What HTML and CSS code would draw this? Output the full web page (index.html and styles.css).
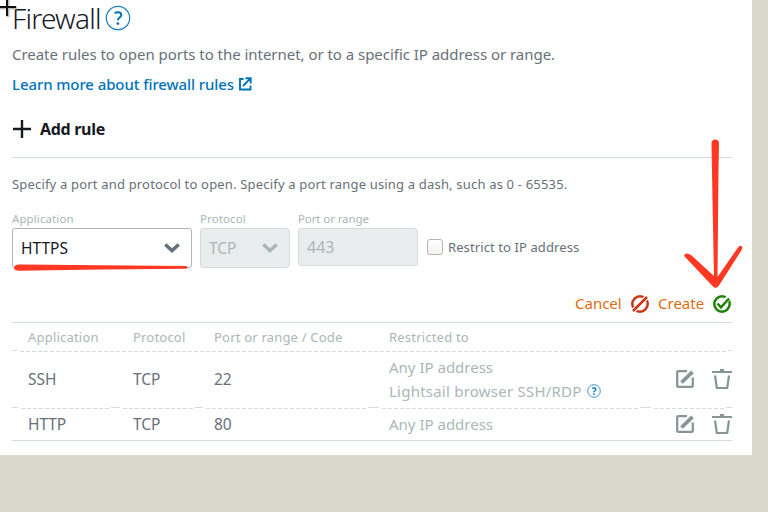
FILE: index.html
```html
<!DOCTYPE html>
<html lang="en">
<head>
<meta charset="utf-8">
<title>Firewall</title>
<link rel="stylesheet" href="styles.css">
</head>
<body>
<main class="panel">
  <header class="heading">
    <h1 class="title">Firewall</h1>
    <svg class="help" width="26" height="26" viewBox="0 0 26 26"><circle cx="13" cy="13" r="11.7" fill="none" stroke="#1a7fc1" stroke-width="1.2"/><path d="M9.6 8.2C12 6.8 16.3 6.7 16.3 9.9C16.3 12.6 12.7 12.5 12.9 15.4" fill="none" stroke="#0073bb" stroke-width="2"/><circle cx="12.9" cy="18.6" r="1.4" fill="#0073bb"/></svg>
  </header>
  <p class="intro">Create rules to open ports to the internet, or to a specific IP address or range.</p>
  <a class="learn"><span class="learn-text">Learn more about firewall rules</span>
    <svg width="14" height="14" viewBox="0 0 14 14" fill="none" stroke="#0073bb" stroke-width="1.9"><path d="M5.5 2H2v10.500h10.500V8.500M7.500 1.200h5.200v5.200M12.500 1.400L5 9"/></svg>
  </a>
  <div class="add">
    <svg width="20" height="20" viewBox="0 0 20 20"><path d="M10 1v18M1 10h18" stroke="#16191f" stroke-width="2.400"/></svg>
    <span class="add-text">Add rule</span>
  </div>
  <p class="hint"><span>Specify a port and protocol to open. Specify a port range using a dash, such as 0 - 65535.</span></p>
  <section class="form">
    <div class="field app"><label>Application</label>
      <div class="control"><span class="value">HTTPS</span><svg width="18" height="12" viewBox="0 0 18 12"><path d="M2.300 2.500L9 8.500l6.700-6" fill="none" stroke="#687078" stroke-width="3.600"/></svg></div>
    </div>
    <div class="field proto"><label>Protocol</label>
      <div class="control off"><span class="value">TCP</span><svg width="18" height="12" viewBox="0 0 18 12"><path d="M2.300 2.500L9 8.500l6.700-6" fill="none" stroke="#aab7b8" stroke-width="3.600"/></svg></div>
    </div>
    <div class="field port"><label>Port or range</label>
      <div class="control off short"><span>443</span></div>
    </div>
    <div class="restrict"><i class="box"></i><span class="restrict-text">Restrict to IP address</span></div>
  </section>
  <div class="actions">
    <span class="cancel">Cancel</span>
    <svg class="ban" width="18" height="18" viewBox="0 0 18 18"><circle cx="9" cy="9" r="7.700" fill="none" stroke="#d13212" stroke-width="2.500"/><path d="M1 17L17 1" stroke="#fff" stroke-width="5"/><path d="M2 16L16 2" stroke="#d13212" stroke-width="2.500"/></svg>
    <span class="create">Create</span>
    <svg class="ok" width="18" height="18" viewBox="0 0 18 18"><circle cx="9" cy="9" r="7.700" fill="none" stroke="#1d8102" stroke-width="2.500"/><path d="M9 10L17 1" stroke="#fff" stroke-width="5"/><path d="M4.500 8.500l3.500 3.800L16 3.500" fill="none" stroke="#1d8102" stroke-width="2.500"/></svg>
  </div>
  <section class="rules">
    <div class="row head"><span>Application</span><span>Protocol</span><span class="h-port">Port or range / Code</span><span>Restricted to</span></div>
    <svg class="rule" width="720" height="2" viewBox="0 0 720 2"><path d="M0 .5h5M716 .5h4" stroke="#d5dbdb"/><path d="M8 1.500h706" stroke="#d5dbdb" stroke-dasharray="4 2"/></svg>
    <div class="row ssh"><span>SSH</span><span>TCP</span><span>22</span>
      <div class="who"><span class="any">Any IP address</span><div class="browser"><span class="rdp">Lightsail browser SSH/RDP</span><svg width="14" height="14" viewBox="0 0 26 26"><circle cx="13" cy="13" r="11.700" fill="none" stroke="#3c92ca" stroke-width="1.800"/><path d="M9.600 8.200C12 6.800 16.300 6.700 16.300 9.900C16.300 12.600 12.700 12.500 12.900 15.400" fill="none" stroke="#0073bb" stroke-width="2.600"/><circle cx="12.900" cy="18.800" r="1.700" fill="#0073bb"/></svg></div></div>
      <svg class="edit" width="19" height="18" viewBox="0 0 19 18"><path d="M12 1.200H3.300Q2.200 1.200 2.200 2.300v13.400q0 1.100 1.100 1.100h13.400q1.100 0 1.100-1.100V7.500" fill="none" stroke="#879596" stroke-width="2.300"/><path d="M6.500 12.500L17.500 1.800" stroke="#879596" stroke-width="3.800"/></svg>
      <svg class="trash" width="20" height="20" viewBox="0 0 20 20"><path d="M0 3h20M8 1h4M3 6.500l1.800 12.500h10.400l1.800-12.500" fill="none" stroke="#879596" stroke-width="2.200"/></svg>
    </div>
    <svg class="rule" width="720" height="2" viewBox="0 0 720 2"><path d="M0 .5h6M99 .5h9M183 .5h8M356 .5h11M628 .5h11M714 .5h6" stroke="#d5dbdb"/><path d="M9 1.500h88M111 1.500h70M194 1.500h160M370 1.500h256M642 1.500h70" stroke="#d5dbdb" stroke-dasharray="4 2"/></svg>
    <div class="row http"><span class="c-http">HTTP</span><span>TCP</span><span>80</span><div class="who"><span class="any">Any IP address</span></div>
      <svg class="edit" width="19" height="18" viewBox="0 0 19 18"><path d="M12 1.200H3.300Q2.200 1.200 2.200 2.300v13.400q0 1.100 1.100 1.100h13.400q1.100 0 1.100-1.100V7.500" fill="none" stroke="#879596" stroke-width="2.300"/><path d="M6.500 12.500L17.500 1.800" stroke="#879596" stroke-width="3.800"/></svg>
      <svg class="trash" width="20" height="20" viewBox="0 0 20 20"><path d="M0 3h20M8 1h4M3 6.500l1.800 12.500h10.400l1.800-12.500" fill="none" stroke="#879596" stroke-width="2.200"/></svg>
    </div>
  </section>
</main>
<svg class="marks" width="768" height="512" viewBox="0 0 768 512">
  <path d="M14 267.500Q15 264 20 264.500L100 265.200L186 266Q189 267.500 186 268.800L100 269.500L20 270.800Q14 271 14 267.500Z" fill="#ff3823"/>
  <path d="M711.500 143Q712 139.500 715 139.500Q719 139.500 719 143.500L718.500 170L717.500 277L738 247.500Q740 244.500 742 246.500Q743 248 741 251L719 285.500Q716 289.500 713 286.500L686 258Q683 255.500 685 254Q687 252.500 691 255L714 276L712.500 200Z" fill="#ff3823"/>
  <path d="M0 8h17M8 0v17" stroke="#bbb" stroke-width="3"/><path d="M0 7h16M7 0v16" stroke="#111" stroke-width="2"/>
</svg>
</body>
</html>
```
FILE: styles.css
```css
* { box-sizing: border-box; }
body { margin: 0; background: #dad8ca; height: 512px; overflow: hidden; font: 16px/24px "Noto Sans", sans-serif; color: #687078; }
svg { display: block; flex: none; }
h1, p { margin: 0; }
span, label { white-space: nowrap; }
.panel { width: 752px; height: 455px; background: #fff; padding: 0 20px 0 12px; }
.heading { display: flex; height: 42px; padding-top: 5px; }
.title { font-size: 28px; line-height: 27px; font-weight: 300; color: #16191f; width: 93px; letter-spacing: -0.75px; }
.intro { height: 24px; font-size: 15px; letter-spacing: -0.035px; }
.learn { display: flex; height: 36px; padding-top: 6px; color: #0073bb; font-weight: 500; font-size: 15px; letter-spacing: -0.1px; }
.learn-text { width: 226px; }
.learn svg { margin-top: 5px; }
.add { display: flex; height: 56px; padding-top: 17px; border-bottom: 1px solid #d5dbdb; color: #16191f; font-weight: 700; }
.add-text { margin: -2px 0 0 8px; line-height: 24px; letter-spacing: -0.3px; }
.hint { font-size: 13px; height: 53px; padding-top: 14px; letter-spacing: 0.18px; }
.form { display: flex; height: 80px; }
.field { margin-right: 8px; }
.field label { display: block; height: 17px; font-size: 11.500px; line-height: 16px; color: #aab7b8; letter-spacing: 0.1px; }
.port label { letter-spacing: -0.1px; }
.app { width: 180px; }
.proto { width: 90px; }
.port { width: 120px; }
.control { display: flex; justify-content: space-between; align-items: center; height: 40px; padding: 0 10px 0 8px; border: 1px solid #aab7b8; border-radius: 3px; color: #16191f; }
.value { font-size: 15.500px; }
.off { background: #eaeded; border-color: #d5dbdb; color: #aab7b8; }
.short { height: 38px; }
.restrict { display: flex; margin: 28px 0 0 1px; font-size: 13px; line-height: 16px; height: 16px; letter-spacing: 0.1px; }
.box { width: 16px; height: 16px; border: 1px solid #b9b3a8; border-radius: 3px; margin-right: 5px; background: linear-gradient(#fff, #f2f2f2); }
.actions { display: flex; height: 31px; padding-left: 563px; color: #dd6b10; font-size: 15px; }
.cancel { width: 56px; }
.create { width: 55px; margin-left: 9px; }
.actions svg { margin-top: 4px; }
.rules { border-top: 1px solid #d5dbdb; border-bottom: 1px solid #d5dbdb; height: 119px; }
.row { display: grid; grid-template-columns: 105px 81px 175px 286px 37px 20px; padding-left: 16px; align-items: center; font-size: 15.500px; }
.head { height: 27px; font-size: 13px; color: #aab7b8; letter-spacing: 0.2px; }
.ssh { height: 55px; padding-bottom: 1px; }
.http { height: 32px; padding-bottom: 3px; }
.c-http { letter-spacing: -0.1px; }
.who { color: #aab7b8; font-size: 15px; }
.any { display: block; }
.rdp { letter-spacing: 0.23px; }
.browser { display: flex; align-items: center; gap: 5px; }
.marks { position: absolute; left: 0; top: 0; pointer-events: none; }
```
